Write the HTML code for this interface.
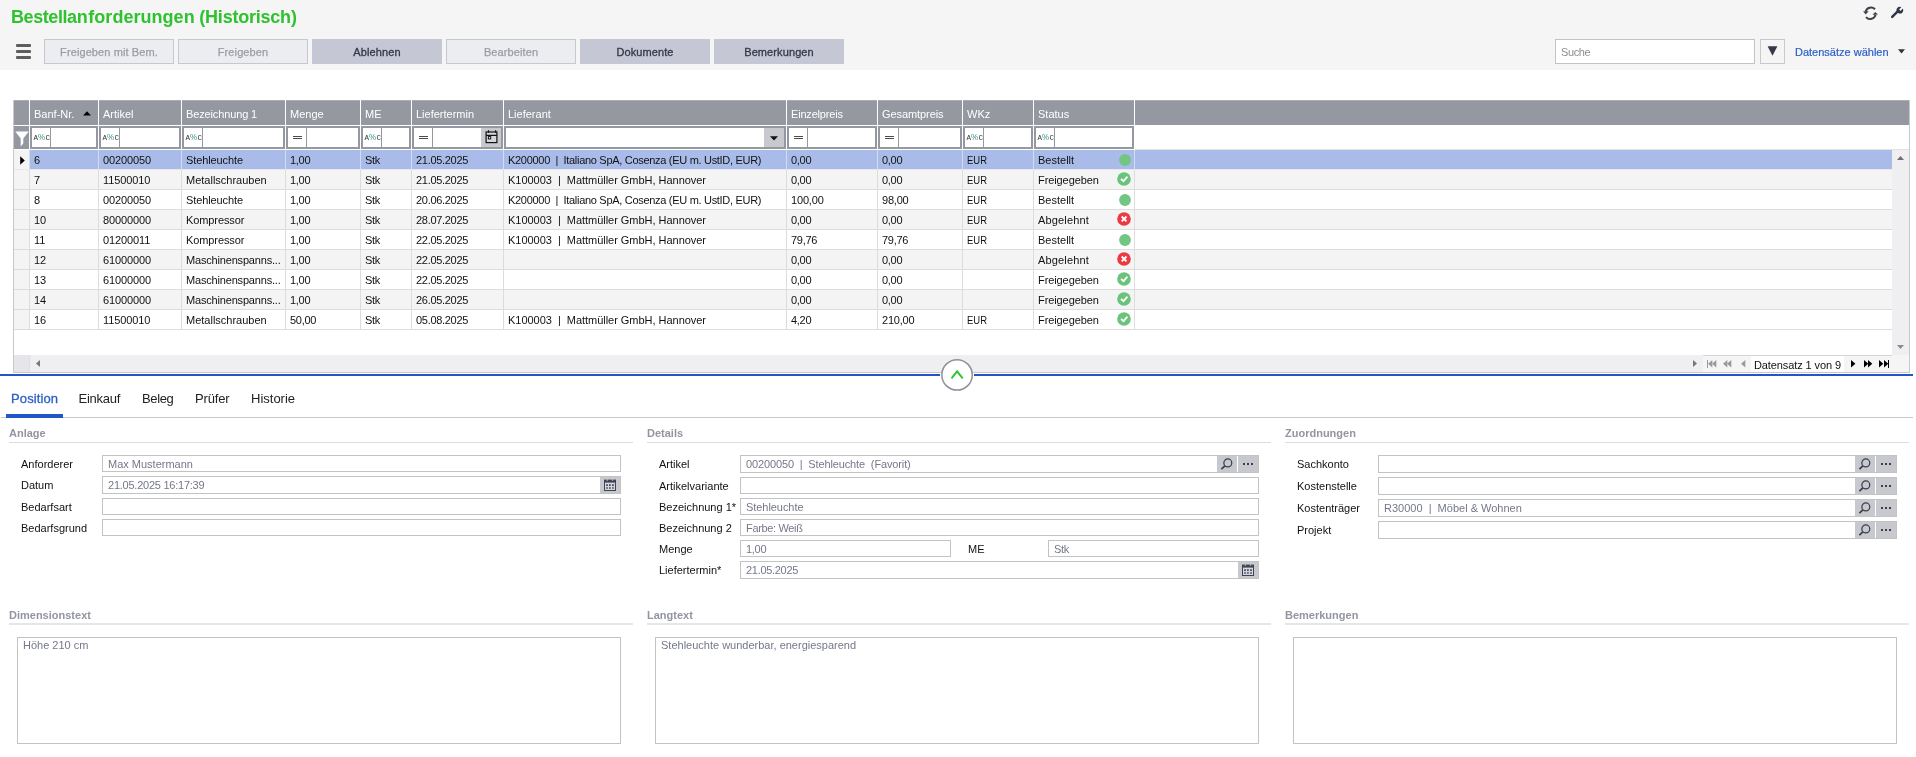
<!DOCTYPE html>
<html lang="de"><head><meta charset="utf-8"><title>Bestellanforderungen (Historisch)</title>
<style>
html,body{margin:0;padding:0}
body{width:1916px;height:757px;overflow:hidden;background:#fff;position:relative;font-family:"Liberation Sans",sans-serif;font-size:11px;color:#111}
#root{position:absolute;left:0;top:0;width:1916px;height:757px;overflow:hidden;will-change:transform}
.a{position:absolute}
.t{position:absolute;white-space:pre;line-height:14px;height:14px}
#hdr{left:0;top:0;width:1916px;height:70px;background:#f5f5f5}
#title{left:11px;top:5px;font-size:18px;line-height:24px;height:24px;font-weight:bold;color:#2ec22e}
.btn{position:absolute;top:39px;width:130px;height:25px;box-sizing:border-box;text-align:center;line-height:27px;font-size:11px;letter-spacing:0.1px}
.btn.dis{background:#ecedf0;border:1px solid #c6c8ce;color:#9a9ca5;line-height:25px;-webkit-text-stroke:0.25px #9a9ca5}
.btn.en{background:#c5c8d4;color:#34374a;-webkit-text-stroke:0.3px #34374a}
#tbl{left:13px;top:100px;width:1897px;height:273px;background:#fff;border-left:1px solid #c9c9cc;border-right:1px solid #c9c9cc;border-bottom:1px solid #c9c9cc;box-sizing:border-box}
.th{position:absolute;top:0;height:25px;background:#9598a1;color:#fff;line-height:29px;padding-left:4px;box-sizing:border-box;white-space:pre}
.fc{position:absolute;top:26px;height:23px;background:#9598a1}
.fi{position:absolute;top:2px;height:19px;background:#fff}
.row{position:absolute;left:0;width:1878px;height:20px;box-sizing:border-box;border-bottom:1px solid #dcdcdc}
.row.alt{background:#f4f4f4}
.row.sel{background:#a9bce9;border-bottom-color:#e6e8ee}
.ind{position:absolute;left:0;top:0;width:15px;height:19px;background:#f4f4f4;border-right:1px solid #d9d9de}
.c{position:absolute;top:0;height:19px;line-height:20px;padding-left:4px;box-sizing:border-box;white-space:pre;border-left:1px solid #dcdcdc;overflow:hidden}
.sel .c{border-left-color:#d5dcf0}
.lbl{position:absolute;white-space:pre;line-height:14px;color:#111}
.inp{position:absolute;box-sizing:border-box;border:1px solid #c4c3c3;background:#fff;color:#75788a;white-space:pre;padding-left:5px;overflow:hidden}
.ib{position:absolute;background:#c8c9cf}
.sh{position:absolute;font-weight:bold;color:#9395a1;line-height:14px;white-space:pre}
.sl{position:absolute;height:1px;background:#dcdcdf;width:624px}
.sl2{position:absolute;height:2px;background:#e6e6ea;width:624px}
.tab{position:absolute;top:391px;font-size:13px;line-height:16px;white-space:pre;color:#222}
svg{position:absolute;overflow:visible}
</style></head><body>
<div id="root">

<div id="hdr" class="a"></div>
<div id="title" class="t"><span style="letter-spacing:-0.42px">Bestellan</span><span style="margin-left:1px;letter-spacing:0.04px">forderungen</span><span style="letter-spacing:-0.22px;margin-left:-0.2px"> (Historisch)</span></div>
<div class="a" style="left:16px;top:44.3px;width:14.5px;height:3px;border-radius:1px;background:#5e5e5e"></div>
<div class="a" style="left:16px;top:50.3px;width:14.5px;height:3px;border-radius:1px;background:#5e5e5e"></div>
<div class="a" style="left:16px;top:56.3px;width:14.5px;height:3px;border-radius:1px;background:#5e5e5e"></div>
<div class="btn dis" style="left:44px">Freigeben mit Bem.</div>
<div class="btn dis" style="left:178px">Freigeben</div>
<div class="btn en" style="left:312px">Ablehnen</div>
<div class="btn dis" style="left:446px">Bearbeiten</div>
<div class="btn en" style="left:580px">Dokumente</div>
<div class="btn en" style="left:714px">Bemerkungen</div>
<div class="a" style="left:1555px;top:39px;width:200px;height:25px;box-sizing:border-box;border:1px solid #c4c3c3;background:#fff"></div>
<div class="t" style="left:1561px;top:45px;color:#8c8c8c;letter-spacing:-0.4px">Suche</div>
<div class="a" style="left:1760px;top:39px;width:25px;height:25px;box-sizing:border-box;border:1px solid #c9c9cc;background:#f5f5f5"></div>
<svg style="left:1767px;top:46px" width="11" height="10" viewBox="0 0 11 10"><path d="M0.6 0.3H10.4L5.5 9.8Z" fill="#353848"/></svg>
<div class="t" style="left:1795px;top:45px;color:#2b5fc7;-webkit-text-stroke:0.2px #2b5fc7">Datensätze wählen</div>
<svg style="left:1898px;top:49px" width="7" height="5" viewBox="0 0 7 5"><path d="M0 0.3H7L3.5 4.6Z" fill="#333"/></svg>
<svg style="left:1863.2px;top:5.8px" width="15" height="14.4" viewBox="0 0 15 14.4" fill="none" stroke="#3d4049" stroke-width="2"><path d="M12.0 3.3A5.6 5.6 0 0 0 2.6 5.6"/><path d="M3.0 11.2A5.6 5.6 0 0 0 12.6 8.6"/><path d="M0.1 5.3L5.6 5.2L2.7 8.4Z" fill="#3d4049" stroke="none"/><path d="M9.5 8.8L15 8.6L12.2 5.9Z" fill="#3d4049" stroke="none"/></svg>
<svg style="left:1890px;top:6px" width="14" height="14" viewBox="0 0 14 14"><path d="M2.2 10.8L7.2 5.8" stroke="#2f3447" stroke-width="2.5" stroke-linecap="round" fill="none"/><path d="M12.9 2.6L10.6 4.9L9.1 3.4L11.4 1.1A3.4 3.4 0 0 0 6.6 5.2L7.4 6L8.8 7.4A3.4 3.4 0 0 0 12.9 2.6Z" fill="#2f3447"/></svg>
<div id="tbl" class="a">
<div class="th" style="left:0;width:15px;padding:0"></div>
<div class="th" style="left:16px;width:68px">Banf-Nr.</div>
<div class="th" style="left:85px;width:82px">Artikel</div>
<div class="th" style="left:168px;width:103px;letter-spacing:-0.13px">Bezeichnung 1</div>
<div class="th" style="left:272px;width:74px">Menge</div>
<div class="th" style="left:347px;width:50px">ME</div>
<div class="th" style="left:398px;width:91px">Liefertermin</div>
<div class="th" style="left:490px;width:282px">Lieferant</div>
<div class="th" style="left:773px;width:90px;letter-spacing:-0.19px">Einzelpreis</div>
<div class="th" style="left:864px;width:84px;letter-spacing:-0.08px">Gesamtpreis</div>
<div class="th" style="left:949px;width:70px">WKz</div>
<div class="th" style="left:1020px;width:100px">Status</div>
<div class="th" style="left:1121px;width:774px"></div>
<div class="a" style="left:0;top:0;width:1895px;height:1px;background:rgba(255,255,255,0.22)"></div>
<svg style="left:69px;top:11px" width="8" height="5" viewBox="0 0 8 5"><path d="M0 4.6L4 0.2L8 4.6Z" fill="#000"/></svg>
<div class="fc" style="left:0;width:15px"></div>
<svg style="left:1px;top:31px" width="14" height="16" viewBox="0 0 14 16"><path d="M0.3 0.5H13.7L8.3 7.4V12.6L5.7 15.4V7.4Z" fill="#fff"/></svg>
<div class="fc" style="left:16px;width:68px">
<div class="fi" style="left:2px;width:18px"></div><div class="fi" style="left:21px;width:45px"></div>
<div class="t" style="left:3.6px;top:4.5px;font-size:7.5px;line-height:12px;height:12px;color:#333;font-family:'Liberation Mono',monospace">A<span style="font-family:'Liberation Sans',sans-serif;font-size:9.5px;color:#3a9483;display:inline-block;width:7.6px;transform:scaleX(.84);transform-origin:0 50%;margin-left:-0.3px">%</span>C</div>
</div>
<div class="fc" style="left:85px;width:82px">
<div class="fi" style="left:2px;width:18px"></div><div class="fi" style="left:21px;width:59px"></div>
<div class="t" style="left:3.6px;top:4.5px;font-size:7.5px;line-height:12px;height:12px;color:#333;font-family:'Liberation Mono',monospace">A<span style="font-family:'Liberation Sans',sans-serif;font-size:9.5px;color:#3a9483;display:inline-block;width:7.6px;transform:scaleX(.84);transform-origin:0 50%;margin-left:-0.3px">%</span>C</div>
</div>
<div class="fc" style="left:168px;width:103px">
<div class="fi" style="left:2px;width:18px"></div><div class="fi" style="left:21px;width:80px"></div>
<div class="t" style="left:3.6px;top:4.5px;font-size:7.5px;line-height:12px;height:12px;color:#333;font-family:'Liberation Mono',monospace">A<span style="font-family:'Liberation Sans',sans-serif;font-size:9.5px;color:#3a9483;display:inline-block;width:7.6px;transform:scaleX(.84);transform-origin:0 50%;margin-left:-0.3px">%</span>C</div>
</div>
<div class="fc" style="left:272px;width:74px">
<div class="fi" style="left:2px;width:18px"></div><div class="fi" style="left:21px;width:51px"></div>
<div class="a" style="left:7px;top:10px;width:9px;height:1px;background:#4c4c4c"></div><div class="a" style="left:7px;top:12px;width:9px;height:1px;background:#4c4c4c"></div>
</div>
<div class="fc" style="left:347px;width:50px">
<div class="fi" style="left:2px;width:18px"></div><div class="fi" style="left:21px;width:27px"></div>
<div class="t" style="left:3.6px;top:4.5px;font-size:7.5px;line-height:12px;height:12px;color:#333;font-family:'Liberation Mono',monospace">A<span style="font-family:'Liberation Sans',sans-serif;font-size:9.5px;color:#3a9483;display:inline-block;width:7.6px;transform:scaleX(.84);transform-origin:0 50%;margin-left:-0.3px">%</span>C</div>
</div>
<div class="fc" style="left:398px;width:91px">
<div class="fi" style="left:2px;width:18px"></div><div class="fi" style="left:21px;width:48px"></div><div class="fi" style="left:69px;width:20px;background:#c8c9cf"></div>
<div class="a" style="left:7px;top:10px;width:9px;height:1px;background:#4c4c4c"></div><div class="a" style="left:7px;top:12px;width:9px;height:1px;background:#4c4c4c"></div>
<svg style="left:72.6px;top:4px" width="13" height="14" viewBox="0 0 13 14" fill="none" stroke="#111" stroke-width="1.2"><rect x="1.1" y="2" width="10.8" height="10.6" fill="#d6d7db"/><path d="M1.1 5.4H11.9M3.5 0.2V2.8M10.6 0.2V2.8" /><path d="M3.5 0.2V2.8M9.6 0.2V2.8" stroke="none"/><rect x="3.4" y="6.6" width="2.3" height="2.3" stroke-width="1" fill="#fff"/></svg>
</div>
<div class="fc" style="left:490px;width:282px">
<div class="fi" style="left:2px;width:258px"></div><div class="fi" style="left:260px;width:20px;background:#c8c9cf"></div>
<svg style="left:266px;top:10px" width="8" height="5" viewBox="0 0 8 5"><path d="M0 0.3H8L4 4.6Z" fill="#111"/></svg>
</div>
<div class="fc" style="left:773px;width:90px">
<div class="fi" style="left:2px;width:18px"></div><div class="fi" style="left:21px;width:67px"></div>
<div class="a" style="left:7px;top:10px;width:9px;height:1px;background:#4c4c4c"></div><div class="a" style="left:7px;top:12px;width:9px;height:1px;background:#4c4c4c"></div>
</div>
<div class="fc" style="left:864px;width:84px">
<div class="fi" style="left:2px;width:18px"></div><div class="fi" style="left:21px;width:61px"></div>
<div class="a" style="left:7px;top:10px;width:9px;height:1px;background:#4c4c4c"></div><div class="a" style="left:7px;top:12px;width:9px;height:1px;background:#4c4c4c"></div>
</div>
<div class="fc" style="left:949px;width:70px">
<div class="fi" style="left:2px;width:18px"></div><div class="fi" style="left:21px;width:47px"></div>
<div class="t" style="left:3.6px;top:4.5px;font-size:7.5px;line-height:12px;height:12px;color:#333;font-family:'Liberation Mono',monospace">A<span style="font-family:'Liberation Sans',sans-serif;font-size:9.5px;color:#3a9483;display:inline-block;width:7.6px;transform:scaleX(.84);transform-origin:0 50%;margin-left:-0.3px">%</span>C</div>
</div>
<div class="fc" style="left:1020px;width:100px">
<div class="fi" style="left:2px;width:18px"></div><div class="fi" style="left:21px;width:77px"></div>
<div class="t" style="left:3.6px;top:4.5px;font-size:7.5px;line-height:12px;height:12px;color:#333;font-family:'Liberation Mono',monospace">A<span style="font-family:'Liberation Sans',sans-serif;font-size:9.5px;color:#3a9483;display:inline-block;width:7.6px;transform:scaleX(.84);transform-origin:0 50%;margin-left:-0.3px">%</span>C</div>
</div>
<div class="a" style="left:1121px;top:49px;width:774px;height:1px;background:#e4e2df"></div>
<div class="row sel" style="top:50px">
<div class="ind"></div>
<svg style="left:6px;top:5.5px" width="5" height="9" viewBox="0 0 5 9"><path d="M0.2 0.2L4.8 4.5L0.2 8.8Z" fill="#000"/></svg>
<div class="c" style="left:15px;width:69px;letter-spacing:-0.1px">6</div>
<div class="c" style="left:84px;width:83px;letter-spacing:-0.12px">00200050</div>
<div class="c" style="left:167px;width:104px;letter-spacing:-0.1px">Stehleuchte</div>
<div class="c" style="left:271px;width:75px;letter-spacing:-0.3px">1,00</div>
<div class="c" style="left:346px;width:51px;letter-spacing:-0.3px">Stk</div>
<div class="c" style="left:397px;width:92px;letter-spacing:-0.3px">21.05.2025</div>
<div class="c" style="left:489px;width:283px;letter-spacing:-0.3px">K200000  |  Italiano SpA, Cosenza (EU m. UstID, EUR)</div>
<div class="c" style="left:772px;width:91px;letter-spacing:-0.3px">0,00</div>
<div class="c" style="left:863px;width:85px;letter-spacing:-0.3px">0,00</div>
<div class="c" style="left:948px;width:71px"><span style="display:inline-block;transform:scaleX(.86);transform-origin:0 50%">EUR</span></div>
<div class="c" style="left:1019px;width:101px">Bestellt</div>
<div class="c" style="left:1120px;width:1px;padding:0"></div>
<svg style="left:1105px;top:3.5px" width="12" height="12" viewBox="0 0 12 12"><circle cx="6" cy="6" r="5.9" fill="#73c583"/></svg>
</div>
<div class="row alt" style="top:70px">
<div class="ind"></div>
<div class="c" style="left:15px;width:69px;letter-spacing:-0.1px">7</div>
<div class="c" style="left:84px;width:83px;letter-spacing:-0.12px">11500010</div>
<div class="c" style="left:167px;width:104px">Metallschrauben</div>
<div class="c" style="left:271px;width:75px;letter-spacing:-0.3px">1,00</div>
<div class="c" style="left:346px;width:51px;letter-spacing:-0.3px">Stk</div>
<div class="c" style="left:397px;width:92px;letter-spacing:-0.3px">21.05.2025</div>
<div class="c" style="left:489px;width:283px;letter-spacing:-0.03px">K100003  |  Mattmüller GmbH, Hannover</div>
<div class="c" style="left:772px;width:91px;letter-spacing:-0.3px">0,00</div>
<div class="c" style="left:863px;width:85px;letter-spacing:-0.3px">0,00</div>
<div class="c" style="left:948px;width:71px"><span style="display:inline-block;transform:scaleX(.86);transform-origin:0 50%">EUR</span></div>
<div class="c" style="left:1019px;width:101px;letter-spacing:-0.09px">Freigegeben</div>
<div class="c" style="left:1120px;width:1px;padding:0"></div>
<svg style="left:1103px;top:2px" width="14" height="14" viewBox="0 0 14 14"><circle cx="7" cy="7" r="6.8" fill="#6ac37a"/><path d="M4 7L6.5 9.2L10.4 4.6" fill="none" stroke="#fff" stroke-width="1.8"/></svg>
</div>
<div class="row" style="top:90px">
<div class="ind"></div>
<div class="c" style="left:15px;width:69px;letter-spacing:-0.1px">8</div>
<div class="c" style="left:84px;width:83px;letter-spacing:-0.12px">00200050</div>
<div class="c" style="left:167px;width:104px;letter-spacing:-0.1px">Stehleuchte</div>
<div class="c" style="left:271px;width:75px;letter-spacing:-0.3px">1,00</div>
<div class="c" style="left:346px;width:51px;letter-spacing:-0.3px">Stk</div>
<div class="c" style="left:397px;width:92px;letter-spacing:-0.3px">20.06.2025</div>
<div class="c" style="left:489px;width:283px;letter-spacing:-0.3px">K200000  |  Italiano SpA, Cosenza (EU m. UstID, EUR)</div>
<div class="c" style="left:772px;width:91px;letter-spacing:-0.17px">100,00</div>
<div class="c" style="left:863px;width:85px;letter-spacing:-0.22px">98,00</div>
<div class="c" style="left:948px;width:71px"><span style="display:inline-block;transform:scaleX(.86);transform-origin:0 50%">EUR</span></div>
<div class="c" style="left:1019px;width:101px">Bestellt</div>
<div class="c" style="left:1120px;width:1px;padding:0"></div>
<svg style="left:1105px;top:3.5px" width="12" height="12" viewBox="0 0 12 12"><circle cx="6" cy="6" r="5.9" fill="#73c583"/></svg>
</div>
<div class="row alt" style="top:110px">
<div class="ind"></div>
<div class="c" style="left:15px;width:69px;letter-spacing:-0.1px">10</div>
<div class="c" style="left:84px;width:83px;letter-spacing:-0.12px">80000000</div>
<div class="c" style="left:167px;width:104px;letter-spacing:-0.1px">Kompressor</div>
<div class="c" style="left:271px;width:75px;letter-spacing:-0.3px">1,00</div>
<div class="c" style="left:346px;width:51px;letter-spacing:-0.3px">Stk</div>
<div class="c" style="left:397px;width:92px;letter-spacing:-0.3px">28.07.2025</div>
<div class="c" style="left:489px;width:283px;letter-spacing:-0.03px">K100003  |  Mattmüller GmbH, Hannover</div>
<div class="c" style="left:772px;width:91px;letter-spacing:-0.3px">0,00</div>
<div class="c" style="left:863px;width:85px;letter-spacing:-0.3px">0,00</div>
<div class="c" style="left:948px;width:71px"><span style="display:inline-block;transform:scaleX(.86);transform-origin:0 50%">EUR</span></div>
<div class="c" style="left:1019px;width:101px;letter-spacing:0.17px">Abgelehnt</div>
<div class="c" style="left:1120px;width:1px;padding:0"></div>
<svg style="left:1103px;top:2px" width="14" height="14" viewBox="0 0 14 14"><circle cx="7" cy="7" r="6.8" fill="#ec3a42"/><path d="M4.7 4.5L9.5 9.3M9.5 4.5L4.7 9.3" fill="none" stroke="#fff" stroke-width="1.9"/></svg>
</div>
<div class="row" style="top:130px">
<div class="ind"></div>
<div class="c" style="left:15px;width:69px;letter-spacing:-0.1px">11</div>
<div class="c" style="left:84px;width:83px;letter-spacing:-0.12px">01200011</div>
<div class="c" style="left:167px;width:104px;letter-spacing:-0.1px">Kompressor</div>
<div class="c" style="left:271px;width:75px;letter-spacing:-0.3px">1,00</div>
<div class="c" style="left:346px;width:51px;letter-spacing:-0.3px">Stk</div>
<div class="c" style="left:397px;width:92px;letter-spacing:-0.3px">22.05.2025</div>
<div class="c" style="left:489px;width:283px;letter-spacing:-0.03px">K100003  |  Mattmüller GmbH, Hannover</div>
<div class="c" style="left:772px;width:91px;letter-spacing:-0.3px">79,76</div>
<div class="c" style="left:863px;width:85px;letter-spacing:-0.3px">79,76</div>
<div class="c" style="left:948px;width:71px"><span style="display:inline-block;transform:scaleX(.86);transform-origin:0 50%">EUR</span></div>
<div class="c" style="left:1019px;width:101px">Bestellt</div>
<div class="c" style="left:1120px;width:1px;padding:0"></div>
<svg style="left:1105px;top:3.5px" width="12" height="12" viewBox="0 0 12 12"><circle cx="6" cy="6" r="5.9" fill="#73c583"/></svg>
</div>
<div class="row alt" style="top:150px">
<div class="ind"></div>
<div class="c" style="left:15px;width:69px;letter-spacing:-0.1px">12</div>
<div class="c" style="left:84px;width:83px;letter-spacing:-0.12px">61000000</div>
<div class="c" style="left:167px;width:104px;letter-spacing:-0.18px">Maschinenspanns...</div>
<div class="c" style="left:271px;width:75px;letter-spacing:-0.3px">1,00</div>
<div class="c" style="left:346px;width:51px;letter-spacing:-0.3px">Stk</div>
<div class="c" style="left:397px;width:92px;letter-spacing:-0.3px">22.05.2025</div>
<div class="c" style="left:489px;width:283px"></div>
<div class="c" style="left:772px;width:91px;letter-spacing:-0.3px">0,00</div>
<div class="c" style="left:863px;width:85px;letter-spacing:-0.3px">0,00</div>
<div class="c" style="left:948px;width:71px"></div>
<div class="c" style="left:1019px;width:101px;letter-spacing:0.17px">Abgelehnt</div>
<div class="c" style="left:1120px;width:1px;padding:0"></div>
<svg style="left:1103px;top:2px" width="14" height="14" viewBox="0 0 14 14"><circle cx="7" cy="7" r="6.8" fill="#ec3a42"/><path d="M4.7 4.5L9.5 9.3M9.5 4.5L4.7 9.3" fill="none" stroke="#fff" stroke-width="1.9"/></svg>
</div>
<div class="row" style="top:170px">
<div class="ind"></div>
<div class="c" style="left:15px;width:69px;letter-spacing:-0.1px">13</div>
<div class="c" style="left:84px;width:83px;letter-spacing:-0.12px">61000000</div>
<div class="c" style="left:167px;width:104px;letter-spacing:-0.18px">Maschinenspanns...</div>
<div class="c" style="left:271px;width:75px;letter-spacing:-0.3px">1,00</div>
<div class="c" style="left:346px;width:51px;letter-spacing:-0.3px">Stk</div>
<div class="c" style="left:397px;width:92px;letter-spacing:-0.3px">22.05.2025</div>
<div class="c" style="left:489px;width:283px"></div>
<div class="c" style="left:772px;width:91px;letter-spacing:-0.3px">0,00</div>
<div class="c" style="left:863px;width:85px;letter-spacing:-0.3px">0,00</div>
<div class="c" style="left:948px;width:71px"></div>
<div class="c" style="left:1019px;width:101px;letter-spacing:-0.09px">Freigegeben</div>
<div class="c" style="left:1120px;width:1px;padding:0"></div>
<svg style="left:1103px;top:2px" width="14" height="14" viewBox="0 0 14 14"><circle cx="7" cy="7" r="6.8" fill="#6ac37a"/><path d="M4 7L6.5 9.2L10.4 4.6" fill="none" stroke="#fff" stroke-width="1.8"/></svg>
</div>
<div class="row alt" style="top:190px">
<div class="ind"></div>
<div class="c" style="left:15px;width:69px;letter-spacing:-0.1px">14</div>
<div class="c" style="left:84px;width:83px;letter-spacing:-0.12px">61000000</div>
<div class="c" style="left:167px;width:104px;letter-spacing:-0.18px">Maschinenspanns...</div>
<div class="c" style="left:271px;width:75px;letter-spacing:-0.3px">1,00</div>
<div class="c" style="left:346px;width:51px;letter-spacing:-0.3px">Stk</div>
<div class="c" style="left:397px;width:92px;letter-spacing:-0.3px">26.05.2025</div>
<div class="c" style="left:489px;width:283px"></div>
<div class="c" style="left:772px;width:91px;letter-spacing:-0.3px">0,00</div>
<div class="c" style="left:863px;width:85px;letter-spacing:-0.3px">0,00</div>
<div class="c" style="left:948px;width:71px"></div>
<div class="c" style="left:1019px;width:101px;letter-spacing:-0.09px">Freigegeben</div>
<div class="c" style="left:1120px;width:1px;padding:0"></div>
<svg style="left:1103px;top:2px" width="14" height="14" viewBox="0 0 14 14"><circle cx="7" cy="7" r="6.8" fill="#6ac37a"/><path d="M4 7L6.5 9.2L10.4 4.6" fill="none" stroke="#fff" stroke-width="1.8"/></svg>
</div>
<div class="row" style="top:210px">
<div class="ind"></div>
<div class="c" style="left:15px;width:69px;letter-spacing:-0.1px">16</div>
<div class="c" style="left:84px;width:83px;letter-spacing:-0.12px">11500010</div>
<div class="c" style="left:167px;width:104px">Metallschrauben</div>
<div class="c" style="left:271px;width:75px;letter-spacing:-0.3px">50,00</div>
<div class="c" style="left:346px;width:51px;letter-spacing:-0.3px">Stk</div>
<div class="c" style="left:397px;width:92px;letter-spacing:-0.3px">05.08.2025</div>
<div class="c" style="left:489px;width:283px;letter-spacing:-0.03px">K100003  |  Mattmüller GmbH, Hannover</div>
<div class="c" style="left:772px;width:91px;letter-spacing:-0.3px">4,20</div>
<div class="c" style="left:863px;width:85px;letter-spacing:-0.2px">210,00</div>
<div class="c" style="left:948px;width:71px"><span style="display:inline-block;transform:scaleX(.86);transform-origin:0 50%">EUR</span></div>
<div class="c" style="left:1019px;width:101px;letter-spacing:-0.09px">Freigegeben</div>
<div class="c" style="left:1120px;width:1px;padding:0"></div>
<svg style="left:1103px;top:2px" width="14" height="14" viewBox="0 0 14 14"><circle cx="7" cy="7" r="6.8" fill="#6ac37a"/><path d="M4 7L6.5 9.2L10.4 4.6" fill="none" stroke="#fff" stroke-width="1.8"/></svg>
</div>
<div class="a" style="left:1878px;top:50px;width:17px;height:205px;background:#efeff2"></div>
<svg style="left:1883px;top:56px" width="7" height="4" viewBox="0 0 7 4"><path d="M0 4L3.5 0L7 4Z" fill="#6e6e72"/></svg>
<svg style="left:1883px;top:245px" width="7" height="4" viewBox="0 0 7 4"><path d="M0 0L3.5 4L7 0Z" fill="#8a8a8e"/></svg>
<div class="a" style="left:0;top:255px;width:1895px;height:17px;background:#efeff2"></div>
<div class="a" style="left:0;top:255px;width:15px;height:17px;background:#e6e6ea;border-right:1px solid #dedee3"></div>
<svg style="left:22px;top:260px" width="4" height="7" viewBox="0 0 4 7"><path d="M4 0L0 3.5L4 7Z" fill="#777"/></svg>
<svg style="left:1679px;top:260px" width="4" height="7" viewBox="0 0 4 7"><path d="M0 0L4 3.5L0 7Z" fill="#777"/></svg>
<div class="a" style="left:1689px;top:255px;width:206px;height:17px;background:#f5f5f5;border-top:1px solid #d4d4d8;box-sizing:border-box"></div>
<div class="a" style="left:1878px;top:255px;width:17px;height:17px;background:#f5f5f5"></div>
<div class="a" style="left:1737px;top:256px;width:93px;height:16px;background:#fff"></div>
<div class="t" style="left:1740px;top:258px;color:#111;letter-spacing:-0.1px">Datensatz 1 von 9</div>
<div class="a" style="left:1692.6px;top:260.3px;width:1.3px;height:7.4px;background:#9a9a9e"></div><svg style="left:1694px;top:260.3px" width="4.3" height="7.4" viewBox="0 0 4.3 7.4"><path d="M4.3 0L0 3.7L4.3 7.4Z" fill="#9a9a9e"/></svg><svg style="left:1698px;top:260.3px" width="4.3" height="7.4" viewBox="0 0 4.3 7.4"><path d="M4.3 0L0 3.7L4.3 7.4Z" fill="#9a9a9e"/></svg>
<svg style="left:1709px;top:260.3px" width="4.3" height="7.4" viewBox="0 0 4.3 7.4"><path d="M4.3 0L0 3.7L4.3 7.4Z" fill="#9a9a9e"/></svg><svg style="left:1713.2px;top:260.3px" width="4.3" height="7.4" viewBox="0 0 4.3 7.4"><path d="M4.3 0L0 3.7L4.3 7.4Z" fill="#9a9a9e"/></svg>
<svg style="left:1727px;top:260.3px" width="4.3" height="7.4" viewBox="0 0 4.3 7.4"><path d="M4.3 0L0 3.7L4.3 7.4Z" fill="#9a9a9e"/></svg>
<svg style="left:1836.6px;top:260.3px" width="4.4" height="7.4" viewBox="0 0 4.4 7.4"><path d="M0 0L4.4 3.7L0 7.4Z" fill="#000"/></svg>
<svg style="left:1850px;top:260.3px" width="4.3" height="7.4" viewBox="0 0 4.3 7.4"><path d="M0 0L4.3 3.7L0 7.4Z" fill="#000"/></svg><svg style="left:1854.4px;top:260.3px" width="4.3" height="7.4" viewBox="0 0 4.3 7.4"><path d="M0 0L4.3 3.7L0 7.4Z" fill="#000"/></svg>
<svg style="left:1865.4px;top:260.3px" width="4.3" height="7.4" viewBox="0 0 4.3 7.4"><path d="M0 0L4.3 3.7L0 7.4Z" fill="#000"/></svg><svg style="left:1869.6px;top:260.3px" width="4.3" height="7.4" viewBox="0 0 4.3 7.4"><path d="M0 0L4.3 3.7L0 7.4Z" fill="#000"/></svg><div class="a" style="left:1874px;top:260.3px;width:1.4px;height:7.4px;background:#000"></div>
</div>
<div class="a" style="left:0;top:374px;width:939.9px;height:2px;background:#1f57c9"></div>
<div class="a" style="left:974.1px;top:374px;width:938.9px;height:2px;background:#1f57c9"></div>
<svg style="left:940px;top:358px" width="34" height="34" viewBox="0 0 34 34"><circle cx="17.05" cy="16.9" r="15.2" fill="#fff" stroke="#8e919b" stroke-width="1.5"/><path d="M11.5 20.3L17.1 13.3L22.7 20.3" fill="none" stroke="#2fc52f" stroke-width="1.9"/></svg>
<div class="tab" style="left:11px;color:#2b5fc7;-webkit-text-stroke:0.3px #2b5fc7;letter-spacing:0.12px">Position</div>
<div class="tab" style="left:78.5px;color:#222;letter-spacing:-0.25px">Einkauf</div>
<div class="tab" style="left:142px;color:#222;letter-spacing:-0.35px">Beleg</div>
<div class="tab" style="left:195px;color:#222;letter-spacing:-0.15px">Prüfer</div>
<div class="tab" style="left:251px">Historie</div>
<div class="a" style="left:1px;top:417px;width:1912px;height:1px;background:#c9c9cc"></div>
<div class="a" style="left:6px;top:414px;width:57px;height:4px;background:#1f57c9"></div>
<div class="sh" style="left:9px;top:426px">Anlage</div><div class="sl" style="left:9px;top:442px"></div>
<div class="sh" style="left:647px;top:426px">Details</div><div class="sl" style="left:647px;top:442px"></div>
<div class="sh" style="left:1285px;top:426px">Zuordnungen</div><div class="sl" style="left:1285px;top:442px"></div>
<div class="sh" style="left:9px;top:608px">Dimensionstext</div><div class="sl2" style="left:9px;top:623px"></div>
<div class="sh" style="left:647px;top:608px">Langtext</div><div class="sl2" style="left:647px;top:623px"></div>
<div class="sh" style="left:1285px;top:608px">Bemerkungen</div><div class="sl2" style="left:1285px;top:623px"></div>
<div class="lbl" style="left:21px;top:457px">Anforderer</div>
<div class="inp" style="left:102px;top:455px;width:519px;height:17px;line-height:16px">Max Mustermann</div>
<div class="lbl" style="left:21px;top:478px">Datum</div>
<div class="inp" style="left:102px;top:476px;width:519px;height:18px;line-height:17px;letter-spacing:-0.24px">21.05.2025 16:17:39</div>
<div class="ib" style="left:600.2px;top:477px;width:19.8px;height:16px"></div><svg style="left:604px;top:479px" width="12" height="12" viewBox="0 0 12 12"><rect x="0.5" y="1.5" width="11" height="10" fill="#d6d7dc" stroke="#3f4354" stroke-width="1"/><rect x="0" y="0.6" width="12" height="3" fill="#3f4354"/><circle cx="3.3" cy="0.9" r="0.75" fill="#c8c9cf"/><circle cx="8.5" cy="0.9" r="0.75" fill="#c8c9cf"/><path d="M2.1 5.2h1.8v1.7H2.1zM5 5.2h1.8v1.7H5zM8.1 5.2h1.8v1.7H8.1zM2.1 8.2h1.8v1.6H2.1zM5 8.2h1.8v1.6H5zM8.1 8.2h1.8v1.6H8.1z" fill="#4a4e5f"/></svg>
<div class="lbl" style="left:21px;top:500px">Bedarfsart</div>
<div class="inp" style="left:102px;top:498px;width:519px;height:17px;line-height:16px"></div>
<div class="lbl" style="left:21px;top:521px">Bedarfsgrund</div>
<div class="inp" style="left:102px;top:519px;width:519px;height:17px;line-height:16px"></div>
<div class="lbl" style="left:659px;top:457px">Artikel</div>
<div class="inp" style="left:740px;top:455px;width:519px;height:18px;line-height:17px;letter-spacing:-0.13px">00200050  |  Stehleuchte  (Favorit)</div>
<div class="ib" style="left:1217.3px;top:456px;width:19.4px;height:16px"></div>
<svg style="left:1220.2px;top:457.5px" width="13" height="13" viewBox="0 0 13 13" fill="none" stroke="#3b3e4c"><circle cx="7.8" cy="4.9" r="3.95" stroke-width="1.25"/><path d="M4.9 7.9L1.4 11.1" stroke-width="1.7"/></svg>
<div class="ib" style="left:1238.2px;top:456px;width:19.8px;height:16px"></div>
<div class="a" style="left:1242.9px;top:462.8px;width:2.3px;height:2.3px;background:#3b3e4c"></div>
<div class="a" style="left:1247.0px;top:462.8px;width:2.3px;height:2.3px;background:#3b3e4c"></div>
<div class="a" style="left:1251.1000000000001px;top:462.8px;width:2.3px;height:2.3px;background:#3b3e4c"></div>
<div class="lbl" style="left:659px;top:479px">Artikelvariante</div>
<div class="inp" style="left:740px;top:477px;width:519px;height:17px;line-height:16px"></div>
<div class="lbl" style="left:659px;top:500px">Bezeichnung 1*</div>
<div class="inp" style="left:740px;top:498px;width:519px;height:17px;line-height:16px;letter-spacing:-0.06px">Stehleuchte</div>
<div class="lbl" style="left:659px;top:521px">Bezeichnung 2</div>
<div class="inp" style="left:740px;top:519px;width:519px;height:17px;line-height:16px;letter-spacing:-0.34px">Farbe: Weiß</div>
<div class="lbl" style="left:659px;top:542px">Menge</div>
<div class="inp" style="left:740px;top:540px;width:211px;height:17px;line-height:16px;letter-spacing:-0.3px">1,00</div>
<div class="lbl" style="left:968px;top:542px">ME</div>
<div class="inp" style="left:1048px;top:540px;width:211px;height:17px;line-height:16px;letter-spacing:-0.3px">Stk</div>
<div class="lbl" style="left:659px;top:563px">Liefertermin*</div>
<div class="inp" style="left:740px;top:561px;width:519px;height:18px;line-height:17px;letter-spacing:-0.3px">21.05.2025</div>
<div class="ib" style="left:1238.2px;top:562px;width:19.8px;height:16px"></div><svg style="left:1242px;top:564px" width="12" height="12" viewBox="0 0 12 12"><rect x="0.5" y="1.5" width="11" height="10" fill="#d6d7dc" stroke="#3f4354" stroke-width="1"/><rect x="0" y="0.6" width="12" height="3" fill="#3f4354"/><circle cx="3.3" cy="0.9" r="0.75" fill="#c8c9cf"/><circle cx="8.5" cy="0.9" r="0.75" fill="#c8c9cf"/><path d="M2.1 5.2h1.8v1.7H2.1zM5 5.2h1.8v1.7H5zM8.1 5.2h1.8v1.7H8.1zM2.1 8.2h1.8v1.6H2.1zM5 8.2h1.8v1.6H5zM8.1 8.2h1.8v1.6H8.1z" fill="#4a4e5f"/></svg>
<div class="lbl" style="left:1297px;top:457px">Sachkonto</div>
<div class="inp" style="left:1378px;top:455px;width:519px;height:18px;line-height:17px"></div>
<div class="ib" style="left:1855.3px;top:456px;width:19.4px;height:16px"></div>
<svg style="left:1858.2px;top:457.5px" width="13" height="13" viewBox="0 0 13 13" fill="none" stroke="#3b3e4c"><circle cx="7.8" cy="4.9" r="3.95" stroke-width="1.25"/><path d="M4.9 7.9L1.4 11.1" stroke-width="1.7"/></svg>
<div class="ib" style="left:1876.2px;top:456px;width:19.8px;height:16px"></div>
<div class="a" style="left:1880.9px;top:462.8px;width:2.3px;height:2.3px;background:#3b3e4c"></div>
<div class="a" style="left:1885.0px;top:462.8px;width:2.3px;height:2.3px;background:#3b3e4c"></div>
<div class="a" style="left:1889.1000000000001px;top:462.8px;width:2.3px;height:2.3px;background:#3b3e4c"></div>
<div class="lbl" style="left:1297px;top:479px">Kostenstelle</div>
<div class="inp" style="left:1378px;top:477px;width:519px;height:18px;line-height:17px"></div>
<div class="ib" style="left:1855.3px;top:478px;width:19.4px;height:16px"></div>
<svg style="left:1858.2px;top:479.5px" width="13" height="13" viewBox="0 0 13 13" fill="none" stroke="#3b3e4c"><circle cx="7.8" cy="4.9" r="3.95" stroke-width="1.25"/><path d="M4.9 7.9L1.4 11.1" stroke-width="1.7"/></svg>
<div class="ib" style="left:1876.2px;top:478px;width:19.8px;height:16px"></div>
<div class="a" style="left:1880.9px;top:484.8px;width:2.3px;height:2.3px;background:#3b3e4c"></div>
<div class="a" style="left:1885.0px;top:484.8px;width:2.3px;height:2.3px;background:#3b3e4c"></div>
<div class="a" style="left:1889.1000000000001px;top:484.8px;width:2.3px;height:2.3px;background:#3b3e4c"></div>
<div class="lbl" style="left:1297px;top:501px">Kostenträger</div>
<div class="inp" style="left:1378px;top:499px;width:519px;height:18px;line-height:17px">R30000  |  Möbel &amp; Wohnen</div>
<div class="ib" style="left:1855.3px;top:500px;width:19.4px;height:16px"></div>
<svg style="left:1858.2px;top:501.5px" width="13" height="13" viewBox="0 0 13 13" fill="none" stroke="#3b3e4c"><circle cx="7.8" cy="4.9" r="3.95" stroke-width="1.25"/><path d="M4.9 7.9L1.4 11.1" stroke-width="1.7"/></svg>
<div class="ib" style="left:1876.2px;top:500px;width:19.8px;height:16px"></div>
<div class="a" style="left:1880.9px;top:506.8px;width:2.3px;height:2.3px;background:#3b3e4c"></div>
<div class="a" style="left:1885.0px;top:506.8px;width:2.3px;height:2.3px;background:#3b3e4c"></div>
<div class="a" style="left:1889.1000000000001px;top:506.8px;width:2.3px;height:2.3px;background:#3b3e4c"></div>
<div class="lbl" style="left:1297px;top:523px">Projekt</div>
<div class="inp" style="left:1378px;top:521px;width:519px;height:18px;line-height:17px"></div>
<div class="ib" style="left:1855.3px;top:522px;width:19.4px;height:16px"></div>
<svg style="left:1858.2px;top:523.5px" width="13" height="13" viewBox="0 0 13 13" fill="none" stroke="#3b3e4c"><circle cx="7.8" cy="4.9" r="3.95" stroke-width="1.25"/><path d="M4.9 7.9L1.4 11.1" stroke-width="1.7"/></svg>
<div class="ib" style="left:1876.2px;top:522px;width:19.8px;height:16px"></div>
<div class="a" style="left:1880.9px;top:528.8px;width:2.3px;height:2.3px;background:#3b3e4c"></div>
<div class="a" style="left:1885.0px;top:528.8px;width:2.3px;height:2.3px;background:#3b3e4c"></div>
<div class="a" style="left:1889.1000000000001px;top:528.8px;width:2.3px;height:2.3px;background:#3b3e4c"></div>
<div class="inp" style="left:17px;top:637px;width:604px;height:107px;line-height:14px;padding-top:0px">Höhe 210 cm</div>
<div class="inp" style="left:655px;top:637px;width:604px;height:107px;line-height:14px;padding-top:0px">Stehleuchte wunderbar, energiesparend</div>
<div class="inp" style="left:1293px;top:637px;width:604px;height:107px;line-height:14px;padding-top:0px"></div>
</div>
</body></html>
